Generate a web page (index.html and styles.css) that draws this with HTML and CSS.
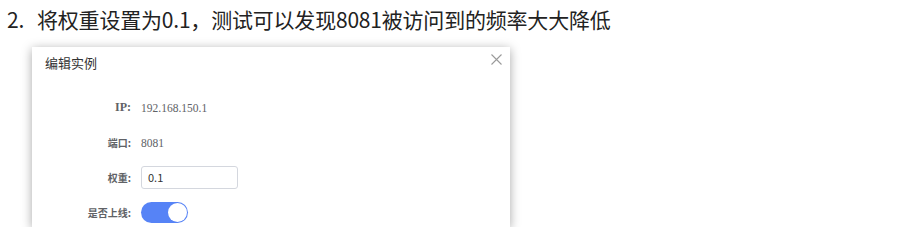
FILE: index.html
```html
<!DOCTYPE html>
<html lang="zh-CN">
<head>
  <meta charset="UTF-8">
  <title>编辑实例</title>
  <link rel="stylesheet" href="styles.css">
</head>
<body>
  <h2 class="step"><span class="step-num">2.</span><span>将权重设置为0.1，测试可以发现8081被访问到的频率大大降低</span></h2>

  <div class="dialog">
    <div class="dialog-header">
      <span class="dialog-title">编辑实例</span>
      <svg class="dialog-close" width="11" height="11" viewBox="0 0 11 11">
        <path d="M0.5 0.5L10.5 10.5M10.5 0.5L0.5 10.5" stroke="#9a9a9a" stroke-width="1.1" fill="none"/>
      </svg>
    </div>
    <div class="dialog-body">
      <div class="form-row">
        <label class="form-label latin">IP:</label>
        <span class="form-value">192.168.150.1</span>
      </div>
      <div class="form-row">
        <label class="form-label">端口:</label>
        <span class="form-value">8081</span>
      </div>
      <div class="form-row">
        <label class="form-label">权重:</label>
        <div class="input">0.1</div>
      </div>
      <div class="form-row">
        <label class="form-label">是否上线:</label>
        <span class="switch"><span class="switch-knob"></span></span>
      </div>
    </div>
  </div>
</body>
</html>
```

FILE: styles.css
```css
body {
  margin: 0;
  background: #fff;
  font-family: "Noto Sans CJK SC", "Noto Sans", sans-serif;
  color: #222;
}
.step {
  display: flex;
  margin: 0;
  padding: 6px 0 0 7px;
  height: 41px;
  box-sizing: border-box;
  font-size: 21px;
  font-weight: normal;
  line-height: 26px;
  letter-spacing: -0.2px;
}
.step-num {
  width: 30px;
}
.dialog {
  margin-left: 32px;
  margin-top: 6px;
  width: 478px;
  height: 180px;
  background: #fff;
  box-shadow: 0 2px 10px rgba(0, 0, 0, 0.35);
}
.dialog-header {
  display: flex;
  justify-content: space-between;
  align-items: center;
  padding: 5px 8px 0 13px;
  height: 20px;
}
.dialog-title {
  font-size: 13px;
  color: #333;
}
.dialog-close {
  margin-top: -6px;
}
.dialog-body {
  padding-top: 18px;
}
.form-row {
  display: flex;
  align-items: center;
  height: 35px;
}
.form-label {
  width: 99px;
  padding-right: 10px;
  text-align: right;
  font-size: 10px;
  font-weight: bold;
  color: #606266;
}
.form-label.latin {
  font-family: "Liberation Serif", serif;
  font-size: 12px;
}
.form-value {
  font-family: "Liberation Serif", serif;
  font-size: 11.5px;
  color: #606266;
}
.input {
  width: 97px;
  height: 23px;
  box-sizing: border-box;
  border: 1px solid #d4d7de;
  border-radius: 3px;
  padding-left: 6px;
  font-size: 11px;
  line-height: 21px;
  color: #333;
}
.switch {
  display: flex;
  justify-content: flex-end;
  align-items: center;
  width: 47px;
  height: 21px;
  box-sizing: border-box;
  padding-right: 1px;
  border-radius: 11px;
  background: #5683f6;
}
.switch-knob {
  width: 19px;
  height: 19px;
  border-radius: 50%;
  background: #fff;
}
```
